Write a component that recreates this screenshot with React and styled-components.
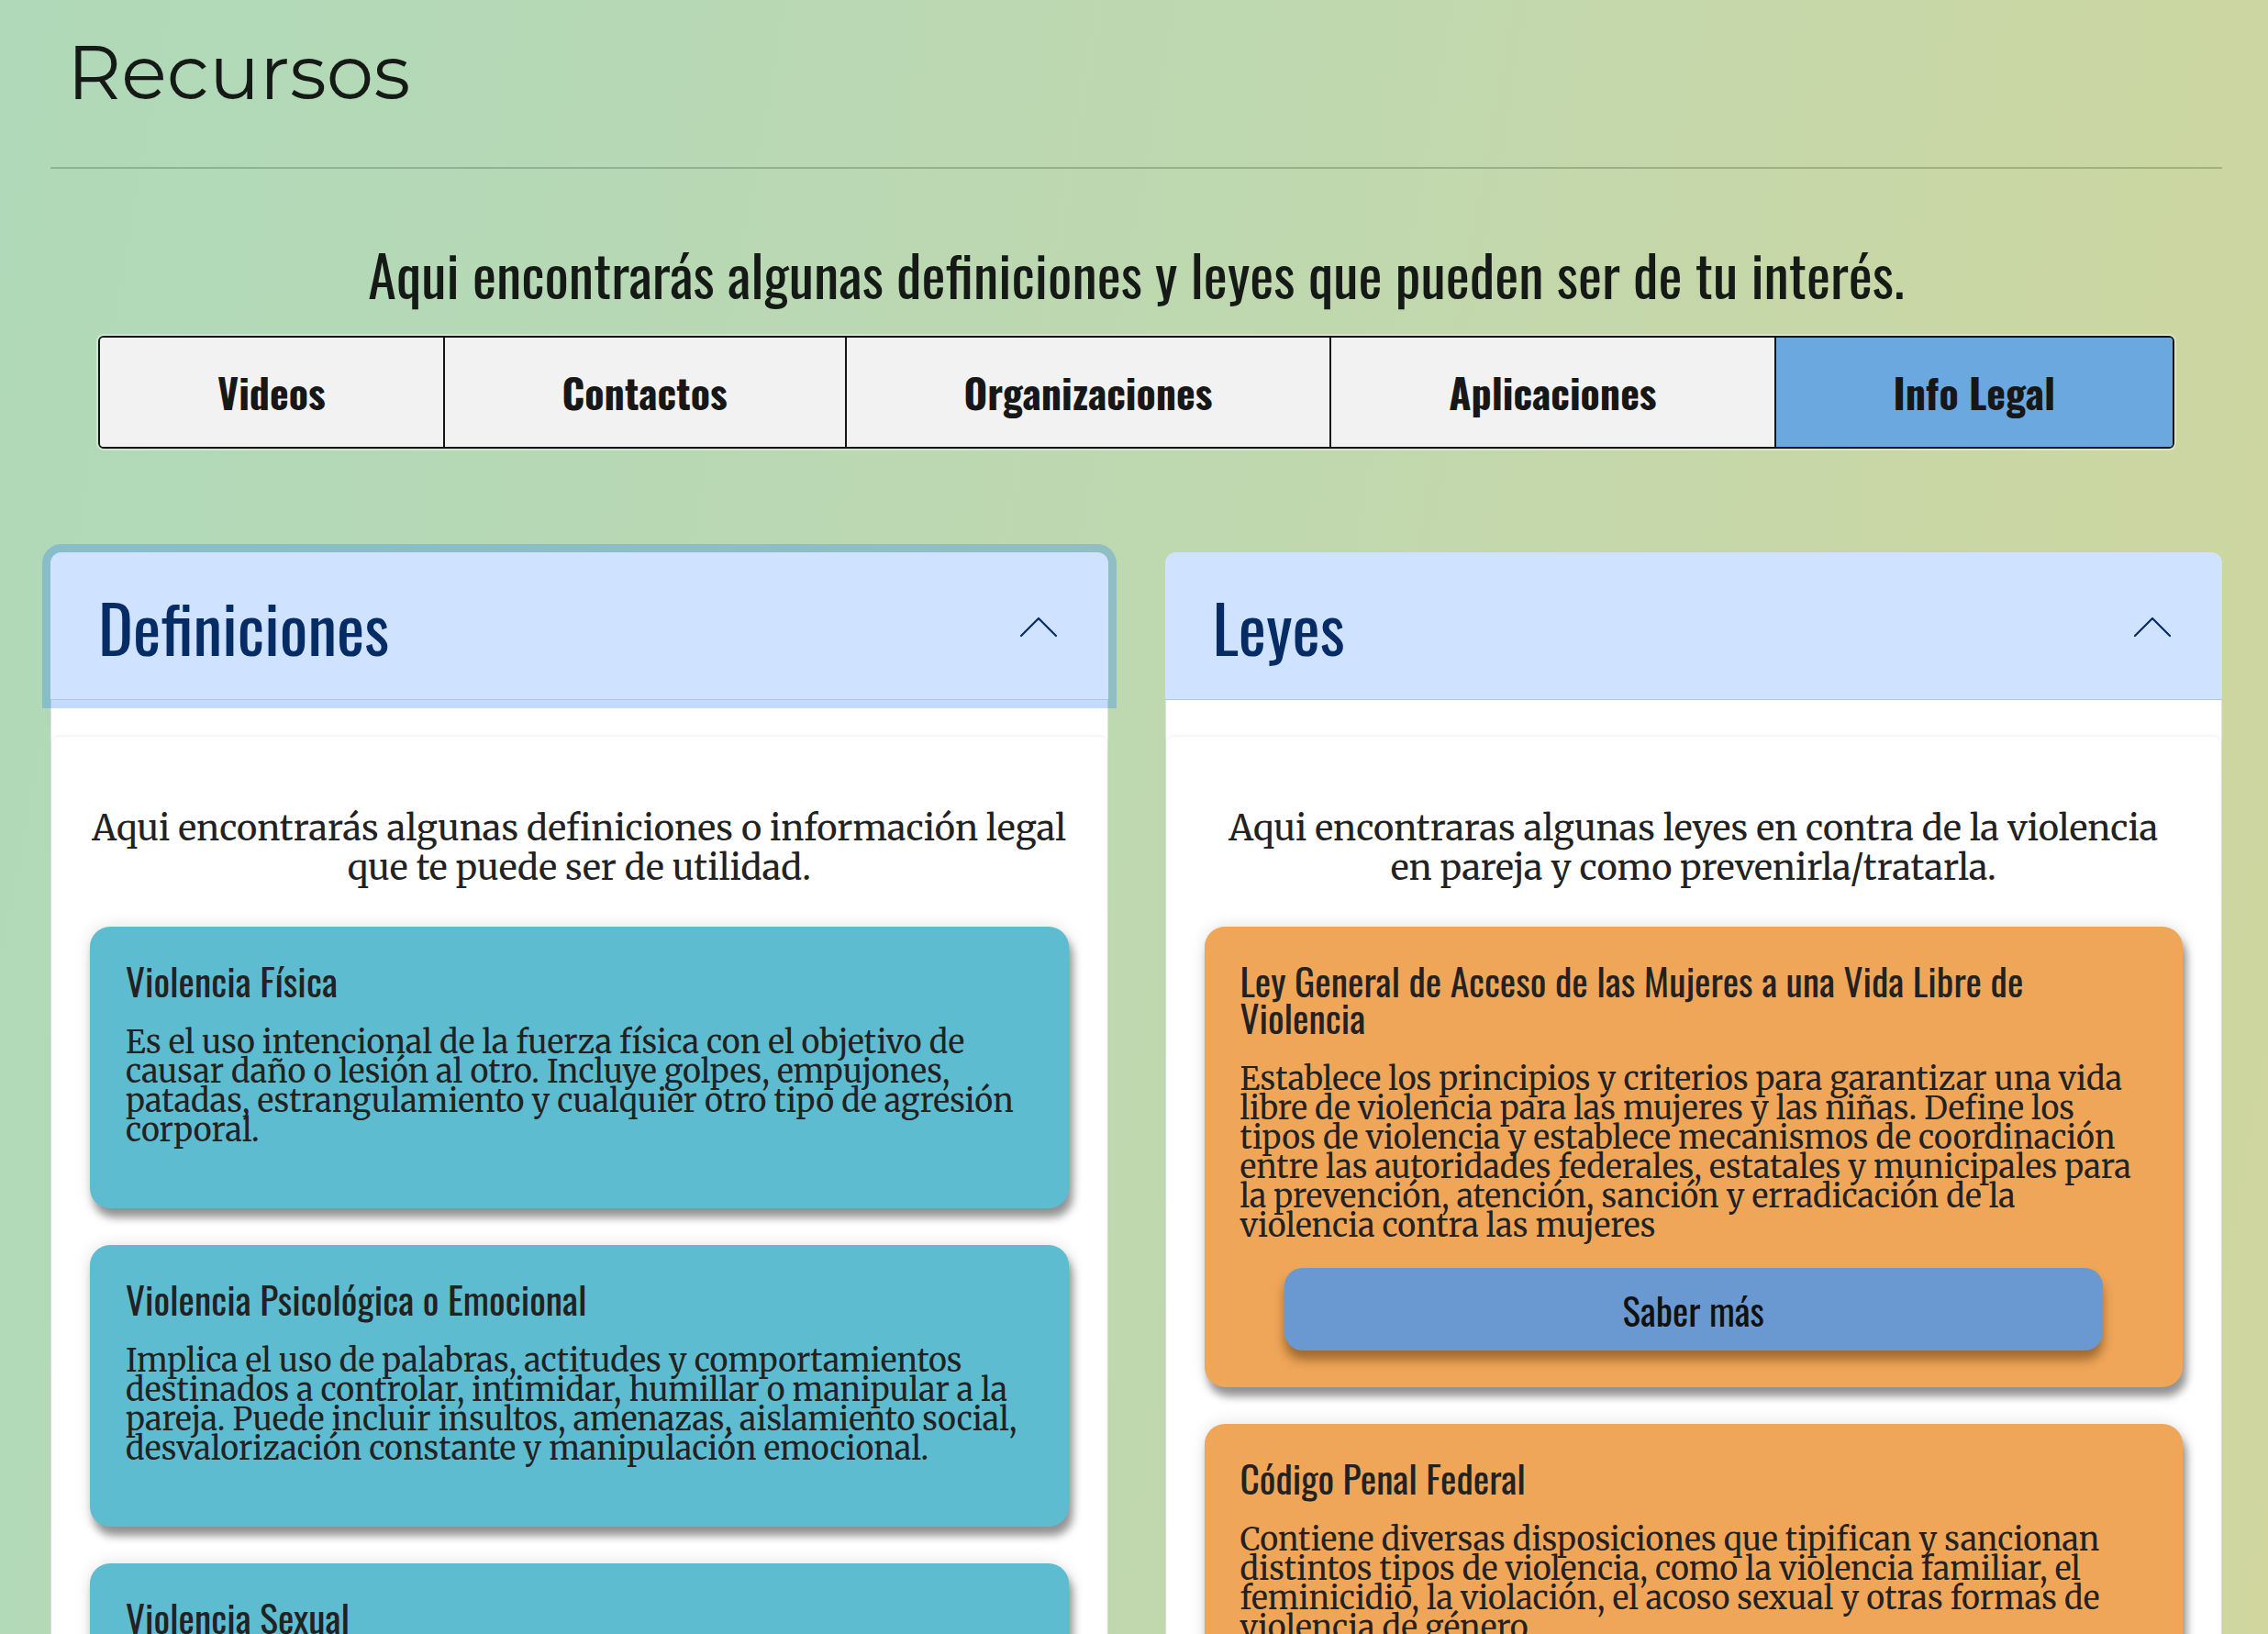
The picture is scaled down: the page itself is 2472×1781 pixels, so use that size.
import React from "react";
import styled, { createGlobalStyle } from "styled-components";

const condensed = `Oswald, "Liberation Sans Narrow", "Arial Narrow", "DejaVu Sans Condensed", sans-serif`;
const serif = `Merriweather, "DejaVu Serif", serif`;
const display = `Montserrat, "DejaVu Sans", sans-serif`;

const tabs = ["Videos", "Contactos", "Organizaciones", "Aplicaciones", "Info Legal"];

const definiciones = [
  {
    title: "Violencia Física",
    text: "Es el uso intencional de la fuerza física con el objetivo de causar daño o lesión al otro. Incluye golpes, empujones, patadas, estrangulamiento y cualquier otro tipo de agresión corporal.",
  },
  {
    title: "Violencia Psicológica o Emocional",
    text: "Implica el uso de palabras, actitudes y comportamientos destinados a controlar, intimidar, humillar o manipular a la pareja. Puede incluir insultos, amenazas, aislamiento social, desvalorización constante y manipulación emocional.",
  },
  {
    title: "Violencia Sexual",
    text: "Cualquier acto de naturaleza sexual realizado sin el consentimiento de la otra persona, incluyendo la coerción, el acoso y la violación dentro de la pareja.",
  },
];

const leyes = [
  {
    title: "Ley General de Acceso de las Mujeres a una Vida Libre de Violencia",
    text: "Establece los principios y criterios para garantizar una vida libre de violencia para las mujeres y las niñas. Define los tipos de violencia y establece mecanismos de coordinación entre las autoridades federales, estatales y municipales para la prevención, atención, sanción y erradicación de la violencia contra las mujeres",
  },
  {
    title: "Código Penal Federal",
    text: "Contiene diversas disposiciones que tipifican y sancionan distintos tipos de violencia, como la violencia familiar, el feminicidio, la violación, el acoso sexual y otras formas de violencia de género.",
  },
];

const Chevron = () => (
  <svg width="44" height="26" viewBox="0 0 44 26" fill="none">
    <path d="M3 23 L22 4 L41 23" stroke="#052c65" strokeWidth="2.2" strokeLinecap="round" strokeLinejoin="round" />
  </svg>
);

const Section = ({ title, intro, items, tone, focused, withButton }) => (
  <AccordionItem>
    <AccordionHeader $focused={focused}>
      <HeaderTitle>{title}</HeaderTitle>
      <Chevron />
    </AccordionHeader>
    <AccordionBody>
      <InnerCard>
        <Intro>
          {intro.map((line) => (
            <IntroLine key={line}>{line}</IntroLine>
          ))}
        </Intro>
        <CardList>
          {items.map((it) => (
            <InfoCard key={it.title} $tone={tone} $withButton={withButton}>
              <CardTitle>{it.title}</CardTitle>
              <CardText>{it.text}</CardText>
              {withButton && <MoreButton>Saber más</MoreButton>}
            </InfoCard>
          ))}
        </CardList>
      </InnerCard>
    </AccordionBody>
  </AccordionItem>
);

export default function App() {
  return (
    <>
      <GlobalStyle />
      <Page>
        <PageTitle>Recursos</PageTitle>
        <Rule />
        <Subtitle>Aqui encontrarás algunas definiciones y leyes que pueden ser de tu interés.</Subtitle>
        <TabBar>
          {tabs.map((t) => (
            <Tab key={t} $active={t === "Info Legal"}>
              {t}
            </Tab>
          ))}
        </TabBar>
        <Columns>
          <Section
            title="Definiciones"
            intro={[
              "Aqui encontrarás algunas definiciones o información legal",
              "que te puede ser de utilidad.",
            ]}
            items={definiciones}
            tone="teal"
            focused
          />
          <Section
            title="Leyes"
            intro={[
              "Aqui encontraras algunas leyes en contra de la violencia",
              "en pareja y como prevenirla/tratarla.",
            ]}
            items={leyes}
            tone="orange"
            withButton
          />
        </Columns>
      </Page>
    </>
  );
}

const GlobalStyle = createGlobalStyle`
  * { box-sizing: border-box; }
  body {
    margin: 0;
    min-height: 100vh;
    background: linear-gradient(100deg, #afd9b9 0%, #bdd8b1 45%, #d0d69e 100%) fixed;
    color: #1a1d1a;
  }
`;

const Page = styled.main`
  padding: 0 50px 80px 55px;
`;

const PageTitle = styled.h1`
  margin: 30px 0 0;
  padding-left: 18px;
  font-family: ${display};
  font-weight: 400;
  font-size: 82px;
  line-height: 1.2;
  color: #161a16;
`;

const Rule = styled.hr`
  margin: 54px 0 0;
  border: 0;
  border-top: 2px solid rgba(20, 40, 20, 0.22);
`;

const Subtitle = styled.h2`
  margin: 77px 0 0;
  text-align: center;
  font-family: ${condensed};
  font-weight: 400;
  font-size: 62px;
  line-height: 74px;
  color: #161a16;
`;

const TabBar = styled.nav`
  display: flex;
  margin: 31px 52px 0;
  height: 123px;
  border: 2px solid #141414;
  border-radius: 6px;
  overflow: hidden;
  box-shadow: 0 0 0 2px rgba(255, 255, 255, 0.35);
`;

const Tab = styled.button`
  flex: 1 1 auto;
  padding: 0;
  border: 0;
  border-left: 2px solid #141414;
  background: ${({ $active }) => ($active ? "#6ba8e0" : "#f2f2f2")};
  font-family: ${condensed};
  font-weight: 700;
  font-size: 44px;
  color: #171717;
  &:first-child {
    border-left: 0;
  }
`;

const Columns = styled.section`
  display: grid;
  grid-template-columns: 1fr 1fr;
  gap: 62px;
  margin-top: 113px;
  align-items: start;
`;

const AccordionItem = styled.article`
  background: #fff;
  border: 1px solid #dee2e6;
  border-radius: 12px;
`;

const AccordionHeader = styled.header`
  position: relative;
  z-index: 2;
  display: flex;
  align-items: center;
  justify-content: space-between;
  height: 161px;
  margin: -1px -1px 0;
  padding: 0 54px 0 52px;
  background: #cfe2ff;
  border-radius: 12px 12px 0 0;
  box-shadow: ${({ $focused }) =>
    $focused
      ? "inset 0 -1px 0 rgba(0,0,0,.125), 0 0 0 9px rgba(13,110,253,.25)"
      : "inset 0 -1px 0 rgba(0,0,0,.125)"};
`;

const HeaderTitle = styled.h3`
  margin: 0;
  font-family: ${condensed};
  font-weight: 400;
  font-size: 72px;
  line-height: 1;
  color: #052c65;
`;

const AccordionBody = styled.div`
  padding: 40px 1px 0;
`;

const InnerCard = styled.div`
  background: #fff;
  border-radius: 8px 8px 0 0;
  box-shadow: 0 -1px 5px rgba(0, 0, 0, 0.07);
  padding: 78px 41px 40px;
`;

const Intro = styled.p`
  margin: 0 -20px 43px;
  text-align: center;
  font-family: ${serif};
  font-size: 38px;
  line-height: 43px;
  color: #222;
`;

const IntroLine = styled.span`
  display: block;
`;

const CardList = styled.div`
  display: flex;
  flex-direction: column;
  gap: 40px;
`;

const InfoCard = styled.div`
  display: flex;
  flex-direction: column;
  padding: 38px 33px ${({ $withButton }) => ($withButton ? "40px" : "69px")} 39px;
  border-radius: 22px;
  background: ${({ $tone }) => ($tone === "orange" ? "#f0a658" : "#5ebcd1")};
  box-shadow: 0 0 18px rgba(0, 0, 0, 0.12), 4px 10px 10px rgba(0, 0, 0, 0.4);
`;

const CardTitle = styled.h4`
  margin: 0 0 32px;
  font-family: ${condensed};
  font-weight: 400;
  font-size: 41.5px;
  line-height: 40px;
  color: #222;
`;

const CardText = styled.p`
  margin: 0;
  font-family: ${serif};
  font-size: 34px;
  line-height: 32px;
  color: #222;
`;

const MoreButton = styled.button`
  align-self: center;
  width: calc(100% - 102px);
  height: 90px;
  margin: 30px 0 0 -6px;
  border: 0;
  border-radius: 20px;
  background: #6a99d1;
  box-shadow: 0 10px 12px rgba(60, 30, 0, 0.45);
  font-family: ${condensed};
  font-size: 41px;
  color: #111;
`;
